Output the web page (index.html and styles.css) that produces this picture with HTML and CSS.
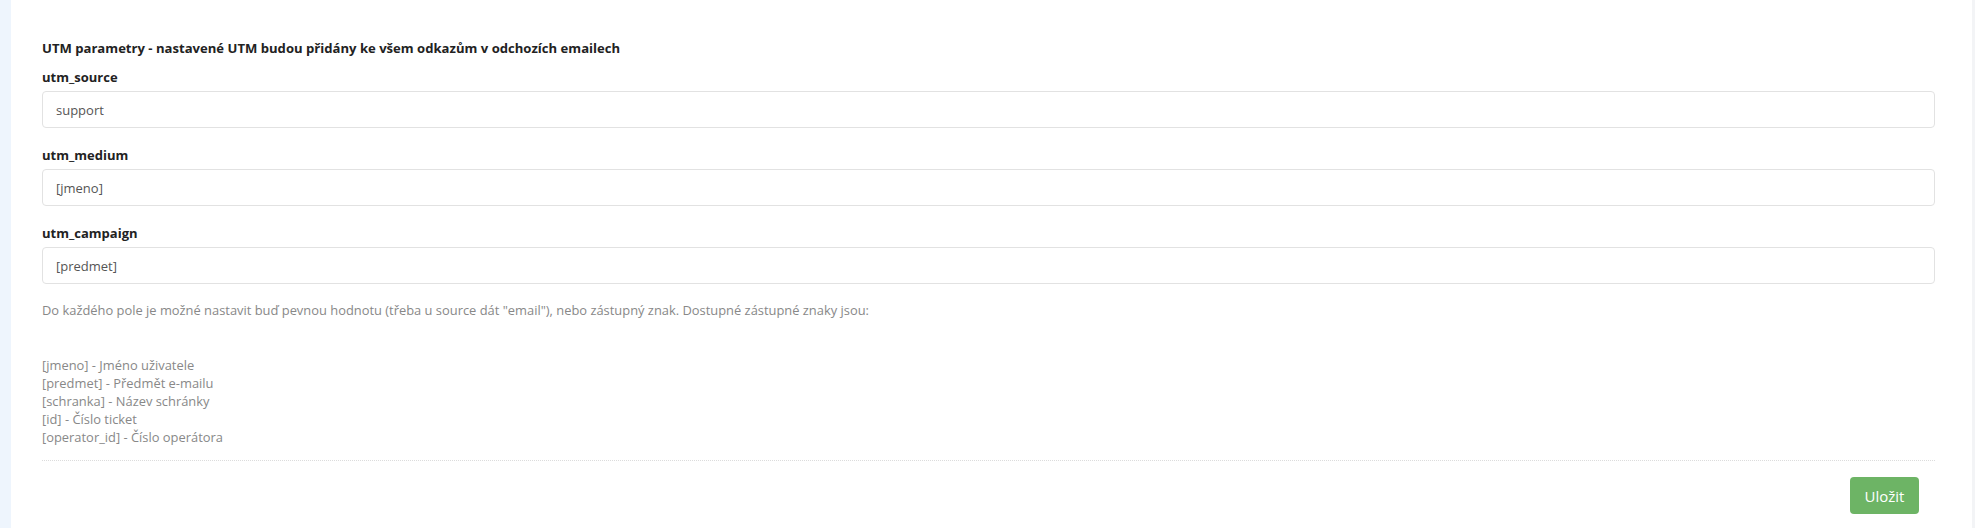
FILE: index.html
```html
<!DOCTYPE html>
<html lang="cs">
<head>
<meta charset="utf-8">
<title>UTM parametry</title>
<link rel="stylesheet" href="styles.css">
</head>
<body>
<div class="layout">
  <div class="side-left"></div>
  <main class="panel">
    <form class="utm-form">
      <h2 class="section-title">UTM parametry - nastavené UTM budou přidány ke všem odkazům v odchozích emailech</h2>
      <div class="field">
        <label class="field-label" for="utm_source">utm_source</label>
        <input class="field-input" id="utm_source" type="text" value="support">
      </div>
      <div class="field">
        <label class="field-label" for="utm_medium">utm_medium</label>
        <input class="field-input" id="utm_medium" type="text" value="[jmeno]">
      </div>
      <div class="field">
        <label class="field-label" for="utm_campaign">utm_campaign</label>
        <input class="field-input" id="utm_campaign" type="text" value="[predmet]">
      </div>
      <div class="help">
        <p class="help-intro">Do každého pole je možné nastavit buď pevnou hodnotu (třeba u source dát "email"), nebo zástupný znak. Dostupné zástupné znaky jsou:</p>
        <ul class="help-list">
          <li>[jmeno] - Jméno uživatele</li>
          <li>[predmet] - Předmět e-mailu</li>
          <li>[schranka] - Název schránky</li>
          <li>[id] - Číslo ticket</li>
          <li>[operator_id] - Číslo operátora</li>
        </ul>
      </div>
      <div class="actions">
        <button class="btn-save" type="button">Uložit</button>
      </div>
    </form>
  </main>
  <div class="side-right"></div>
</div>
</body>
</html>
```

FILE: styles.css
```css
* { box-sizing: border-box; }
html, body { margin: 0; padding: 0; height: 100%; }
body {
  font-family: "Open Sans", "Noto Sans", sans-serif;
  font-size: 13px;
  color: #333;
  background: #fff;
}
.layout {
  display: flex;
  min-height: 528px;
}
.side-left {
  width: 11px;
  flex: none;
  background: #eef5fd;
}
.side-right {
  width: 3px;
  flex: none;
  background: #f3f4f6;
}
.panel {
  flex: 1;
  background: #fff;
  padding: 39px 37px 0 31px;
}
.utm-form { display: flex; flex-direction: column; }
.section-title {
  margin: 0 0 11px;
  font-size: 13.1px;
  line-height: 18px;
  font-weight: 700;
  color: #222;
}
.field {
  display: flex;
  flex-direction: column;
  gap: 5px;
  margin-bottom: 18px;
}
.field-label {
  font-size: 13px;
  line-height: 18px;
  font-weight: 700;
  color: #222;
}
.field-input {
  height: 37px;
  border: 1px solid #e2e2e2;
  border-radius: 4px;
  padding: 0 13px;
  font-family: inherit;
  font-size: 13px;
  color: #555;
  background: #fff;
  outline: none;
}
.help {
  margin-top: -1px;
  color: #888;
  font-size: 12.9px;
  line-height: 18px;
}
.help-intro { margin: 0 0 37px; }
.help-list {
  list-style: none;
  margin: 0;
  padding: 0;
}
.actions {
  margin-top: 14px;
  border-top: 1px dotted #dcdcdc;
  padding: 16px 16px 0 0;
  display: flex;
  justify-content: flex-end;
}
.btn-save {
  width: 69px;
  height: 37px;
  border: none;
  border-radius: 4px;
  background: #6db465;
  color: #fff;
  font-family: inherit;
  font-size: 15px;
  cursor: pointer;
}
```
